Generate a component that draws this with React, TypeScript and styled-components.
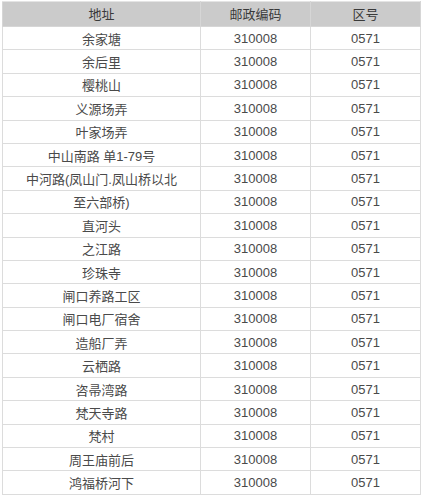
import React from "react";
import styled, { createGlobalStyle } from "styled-components";

const Global = createGlobalStyle`
  html, body { margin: 0; padding: 0; background: #ffffff; }
  body { font-family: "Liberation Sans", "Noto Sans CJK SC", sans-serif; }
`;

const Wrap = styled.div`
  padding: 1px 2px 0 2px;
  width: 418px;
`;

const Table = styled.table`
  width: 418px;
  border-collapse: collapse;
  table-layout: fixed;
  font-size: 13px;
  color: #4a4a4a;
`;

const Col = styled.col<{ $w: number }>`
  width: ${(p) => p.$w}px;
`;

const HeadCell = styled.th`
  background: #cbcbcb;
  color: #3a3a3a;
  font-weight: normal;
  height: 23px;
  padding: 0 0 1px 0;
  text-align: center;
  border: 1px solid #d6d6d6;
  border-top: 1px solid #e4e4e4;
`;

const Cell = styled.td`
  height: 22.4px;
  padding: 0;
  text-align: center;
  border: 1px solid #dcdcdc;
  white-space: nowrap;
  overflow: hidden;
`;

const rows = [
  "余家塘",
  "余后里",
  "樱桃山",
  "义源场弄",
  "叶家场弄",
  "中山南路 单1-79号",
  "中河路(凤山门.凤山桥以北",
  "至六部桥)",
  "直河头",
  "之江路",
  "珍珠寺",
  "闸口养路工区",
  "闸口电厂宿舍",
  "造船厂弄",
  "云栖路",
  "咨帚湾路",
  "梵天寺路",
  "梵村",
  "周王庙前后",
  "鸿福桥河下",
];

export default function App() {
  return (
    <>
      <Global />
      <Wrap>
        <Table>
          <colgroup>
            <Col $w={198} />
            <Col $w={110} />
            <Col $w={110} />
          </colgroup>
          <thead>
            <tr>
              <HeadCell>地址</HeadCell>
              <HeadCell>邮政编码</HeadCell>
              <HeadCell>区号</HeadCell>
            </tr>
          </thead>
          <tbody>
            {rows.map((r, i) => (
              <tr key={i}>
                <Cell>{r}</Cell>
                <Cell>310008</Cell>
                <Cell>0571</Cell>
              </tr>
            ))}
          </tbody>
        </Table>
      </Wrap>
    </>
  );
}
